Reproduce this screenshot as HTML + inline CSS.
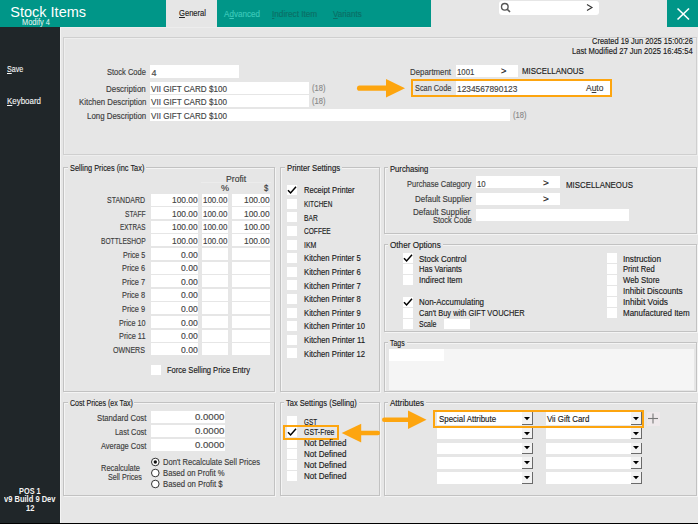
<!DOCTYPE html>
<html><head><meta charset="utf-8"><style>
html,body{margin:0;padding:0;}
body{width:698px;height:524px;overflow:hidden;position:relative;background:#e6e6e6;font-family:"Liberation Sans", sans-serif;}
body>div{position:absolute;box-sizing:border-box;}
.t{white-space:nowrap;transform-origin:0 0;-webkit-text-stroke:0.15px currentColor;}
</style></head><body>
<div style="left:0px;top:0px;width:166px;height:27px;background:#009688;"></div>
<div style="left:217px;top:0px;width:214px;height:27px;background:#009688;"></div>
<div style="left:667px;top:0px;width:31px;height:27px;background:#009688;"></div>
<div style="left:499px;top:1px;width:100px;height:14px;background:#fff;border-radius:3px"></div>
<svg style="position:absolute;left:500px;top:2px" width="12" height="12" viewBox="0 0 12 12"><circle cx="4.8" cy="4.8" r="3.3" fill="none" stroke="#555" stroke-width="1.4"/><line x1="7.2" y1="7.2" x2="10" y2="10" stroke="#555" stroke-width="1.6"/></svg>
<svg style="position:absolute;left:585px;top:3px" width="10" height="9" viewBox="0 0 10 9"><polyline points="2,1.5 7,4.5 2,7.5" fill="none" stroke="#333" stroke-width="1.1"/></svg>
<svg style="position:absolute;left:667px;top:0px" width="31" height="27" viewBox="0 0 31 27"><line x1="10.5" y1="8.5" x2="22" y2="19.5" stroke="#fff" stroke-width="1.6"/><line x1="22" y1="8.5" x2="10.5" y2="19.5" stroke="#fff" stroke-width="1.6"/></svg>
<div style="left:0px;top:27px;width:60px;height:496px;background:#202629;"></div>
<div style="left:60px;top:27px;width:1px;height:496px;background:#f4f4f4;"></div>
<div style="left:60px;top:27px;width:371px;height:1px;background:#ededed;"></div>
<div style="left:0px;top:523px;width:698px;height:1px;background:#000;"></div>
<div style="left:64px;top:38px;width:634px;height:118px;background:transparent;border:1px solid #eeeeee"></div>
<div style="left:63px;top:37px;width:634px;height:118px;background:transparent;border:1px solid #cfcfcf"></div>
<div style="left:150px;top:65px;width:89px;height:13px;background:#fff;"></div>
<div style="left:150px;top:82px;width:159px;height:12px;background:#fff;"></div>
<div style="left:150px;top:95px;width:159px;height:12px;background:#fff;"></div>
<div style="left:150px;top:109px;width:360px;height:12px;background:#fff;"></div>
<div style="left:456px;top:65px;width:62px;height:12px;background:#fff;"></div>
<div style="left:411px;top:79px;width:201px;height:18px;background:transparent;border:2px solid #fda50f"></div>
<div style="left:456px;top:81px;width:154px;height:14px;background:#fff;"></div>
<div style="left:64px;top:168px;width:212px;height:225px;background:transparent;border:1px solid #f4f4f4"></div>
<div style="left:63px;top:167px;width:212px;height:225px;background:transparent;border:1px solid #c2c2c2"></div>
<div style="left:67.6px;top:166px;width:78.30000000000001px;height:4px;background:#e6e6e6;"></div>
<div style="left:201px;top:182px;width:70px;height:1px;background:#ececec;"></div>
<div style="left:150.5px;top:194px;width:47.5px;height:12px;background:#fff;"></div>
<div style="left:202px;top:194px;width:26.30000000000001px;height:12px;background:#fff;"></div>
<div style="left:232.3px;top:194px;width:37.89999999999998px;height:12px;background:#fff;"></div>
<div style="left:150.5px;top:207px;width:47.5px;height:12px;background:#fff;"></div>
<div style="left:202px;top:207px;width:26.30000000000001px;height:12px;background:#fff;"></div>
<div style="left:232.3px;top:207px;width:37.89999999999998px;height:12px;background:#fff;"></div>
<div style="left:150.5px;top:221px;width:47.5px;height:12px;background:#fff;"></div>
<div style="left:202px;top:221px;width:26.30000000000001px;height:12px;background:#fff;"></div>
<div style="left:232.3px;top:221px;width:37.89999999999998px;height:12px;background:#fff;"></div>
<div style="left:150.5px;top:234px;width:47.5px;height:12px;background:#fff;"></div>
<div style="left:202px;top:234px;width:26.30000000000001px;height:12px;background:#fff;"></div>
<div style="left:232.3px;top:234px;width:37.89999999999998px;height:12px;background:#fff;"></div>
<div style="left:150.5px;top:248px;width:47.5px;height:12px;background:#fff;"></div>
<div style="left:202px;top:248px;width:26.30000000000001px;height:12px;background:#fff;"></div>
<div style="left:232.3px;top:248px;width:37.89999999999998px;height:12px;background:#fff;"></div>
<div style="left:150.5px;top:262px;width:47.5px;height:12px;background:#fff;"></div>
<div style="left:202px;top:262px;width:26.30000000000001px;height:12px;background:#fff;"></div>
<div style="left:232.3px;top:262px;width:37.89999999999998px;height:12px;background:#fff;"></div>
<div style="left:150.5px;top:275px;width:47.5px;height:12px;background:#fff;"></div>
<div style="left:202px;top:275px;width:26.30000000000001px;height:12px;background:#fff;"></div>
<div style="left:232.3px;top:275px;width:37.89999999999998px;height:12px;background:#fff;"></div>
<div style="left:150.5px;top:289px;width:47.5px;height:12px;background:#fff;"></div>
<div style="left:202px;top:289px;width:26.30000000000001px;height:12px;background:#fff;"></div>
<div style="left:232.3px;top:289px;width:37.89999999999998px;height:12px;background:#fff;"></div>
<div style="left:150.5px;top:302px;width:47.5px;height:12px;background:#fff;"></div>
<div style="left:202px;top:302px;width:26.30000000000001px;height:12px;background:#fff;"></div>
<div style="left:232.3px;top:302px;width:37.89999999999998px;height:12px;background:#fff;"></div>
<div style="left:150.5px;top:316px;width:47.5px;height:12px;background:#fff;"></div>
<div style="left:202px;top:316px;width:26.30000000000001px;height:12px;background:#fff;"></div>
<div style="left:232.3px;top:316px;width:37.89999999999998px;height:12px;background:#fff;"></div>
<div style="left:150.5px;top:330px;width:47.5px;height:12px;background:#fff;"></div>
<div style="left:202px;top:330px;width:26.30000000000001px;height:12px;background:#fff;"></div>
<div style="left:232.3px;top:330px;width:37.89999999999998px;height:12px;background:#fff;"></div>
<div style="left:150.5px;top:343px;width:47.5px;height:12px;background:#fff;"></div>
<div style="left:202px;top:343px;width:26.30000000000001px;height:12px;background:#fff;"></div>
<div style="left:232.3px;top:343px;width:37.89999999999998px;height:12px;background:#fff;"></div>
<div style="left:151px;top:365px;width:10px;height:10px;background:#fff;"></div>
<div style="left:281px;top:168px;width:100px;height:225px;background:transparent;border:1px solid #f4f4f4"></div>
<div style="left:280px;top:167px;width:100px;height:225px;background:transparent;border:1px solid #c2c2c2"></div>
<div style="left:284.7px;top:166px;width:57.10000000000002px;height:4px;background:#e6e6e6;"></div>
<div style="left:287px;top:185px;width:10px;height:10px;background:#fff;"></div>
<svg style="position:absolute;left:287px;top:185px" width="10" height="10" viewBox="0 0 10 10"><polyline points="1,5.2 3.6,8 9,1.8" fill="none" stroke="#000" stroke-width="1.5"/></svg>
<div style="left:287px;top:199px;width:10px;height:10px;background:#fff;"></div>
<div style="left:287px;top:212px;width:10px;height:10px;background:#fff;"></div>
<div style="left:287px;top:226px;width:10px;height:10px;background:#fff;"></div>
<div style="left:287px;top:240px;width:10px;height:10px;background:#fff;"></div>
<div style="left:287px;top:253px;width:10px;height:10px;background:#fff;"></div>
<div style="left:287px;top:267px;width:10px;height:10px;background:#fff;"></div>
<div style="left:287px;top:280px;width:10px;height:10px;background:#fff;"></div>
<div style="left:287px;top:294px;width:10px;height:10px;background:#fff;"></div>
<div style="left:287px;top:308px;width:10px;height:10px;background:#fff;"></div>
<div style="left:287px;top:321px;width:10px;height:10px;background:#fff;"></div>
<div style="left:287px;top:335px;width:10px;height:10px;background:#fff;"></div>
<div style="left:287px;top:348px;width:10px;height:10px;background:#fff;"></div>
<div style="left:385px;top:168px;width:313px;height:67px;background:transparent;border:1px solid #f4f4f4"></div>
<div style="left:384px;top:167px;width:313px;height:67px;background:transparent;border:1px solid #c2c2c2"></div>
<div style="left:388px;top:166px;width:42.30000000000001px;height:4px;background:#e6e6e6;"></div>
<div style="left:476px;top:176px;width:84px;height:12px;background:#fff;"></div>
<div style="left:476px;top:193px;width:84px;height:12px;background:#fff;"></div>
<div style="left:476px;top:209px;width:153px;height:12px;background:#fff;"></div>
<div style="left:385px;top:245px;width:313px;height:88px;background:transparent;border:1px solid #f4f4f4"></div>
<div style="left:384px;top:244px;width:313px;height:88px;background:transparent;border:1px solid #c2c2c2"></div>
<div style="left:388px;top:243px;width:54.69999999999999px;height:4px;background:#e6e6e6;"></div>
<div style="left:403px;top:253px;width:10px;height:10px;background:#fff;"></div>
<svg style="position:absolute;left:403px;top:253px" width="10" height="10" viewBox="0 0 10 10"><polyline points="1,5.2 3.6,8 9,1.8" fill="none" stroke="#000" stroke-width="1.5"/></svg>
<div style="left:403px;top:264px;width:10px;height:10px;background:#fff;"></div>
<div style="left:403px;top:275px;width:10px;height:10px;background:#fff;"></div>
<div style="left:403px;top:297px;width:10px;height:10px;background:#fff;"></div>
<svg style="position:absolute;left:403px;top:297px" width="10" height="10" viewBox="0 0 10 10"><polyline points="1,5.2 3.6,8 9,1.8" fill="none" stroke="#000" stroke-width="1.5"/></svg>
<div style="left:403px;top:308px;width:10px;height:10px;background:#fff;"></div>
<div style="left:403px;top:319px;width:10px;height:10px;background:#fff;"></div>
<div style="left:444px;top:319px;width:26px;height:9.5px;background:#fff;"></div>
<div style="left:607px;top:253px;width:10px;height:10px;background:#fff;"></div>
<div style="left:607px;top:264px;width:10px;height:10px;background:#fff;"></div>
<div style="left:607px;top:275px;width:10px;height:10px;background:#fff;"></div>
<div style="left:607px;top:286px;width:10px;height:10px;background:#fff;"></div>
<div style="left:607px;top:297px;width:10px;height:10px;background:#fff;"></div>
<div style="left:607px;top:308px;width:10px;height:10px;background:#fff;"></div>
<div style="left:385px;top:343px;width:313px;height:50px;background:transparent;border:1px solid #f4f4f4"></div>
<div style="left:384px;top:342px;width:313px;height:50px;background:transparent;border:1px solid #c2c2c2"></div>
<div style="left:388px;top:341px;width:18.600000000000023px;height:4px;background:#e6e6e6;"></div>
<div style="left:389px;top:349px;width:305px;height:41px;background:#f5f5f5;"></div>
<div style="left:389px;top:349px;width:55px;height:12px;background:#fff;"></div>
<div style="left:64px;top:403px;width:212px;height:94px;background:transparent;border:1px solid #f4f4f4"></div>
<div style="left:63px;top:402px;width:212px;height:94px;background:transparent;border:1px solid #c2c2c2"></div>
<div style="left:67.6px;top:401px;width:66.9px;height:4px;background:#e6e6e6;"></div>
<div style="left:150.5px;top:411px;width:74.5px;height:12px;background:#fff;"></div>
<div style="left:150.5px;top:425px;width:74.5px;height:12px;background:#fff;"></div>
<div style="left:150.5px;top:439px;width:74.5px;height:12px;background:#fff;"></div>
<svg style="position:absolute;left:150px;top:456px" width="12" height="12" viewBox="0 0 12 12"><circle cx="5.3" cy="6" r="3.8" fill="#fff" stroke="#333" stroke-width="1"/><circle cx="5.3" cy="6" r="1.7" fill="#111"/></svg>
<svg style="position:absolute;left:150px;top:467px" width="12" height="12" viewBox="0 0 12 12"><circle cx="5.3" cy="6" r="3.8" fill="#fff" stroke="#333" stroke-width="1"/></svg>
<svg style="position:absolute;left:150px;top:478px" width="12" height="12" viewBox="0 0 12 12"><circle cx="5.3" cy="6" r="3.8" fill="#fff" stroke="#333" stroke-width="1"/></svg>
<div style="left:281px;top:403px;width:100px;height:94px;background:transparent;border:1px solid #f4f4f4"></div>
<div style="left:280px;top:402px;width:100px;height:94px;background:transparent;border:1px solid #c2c2c2"></div>
<div style="left:284.4px;top:401px;width:74.80000000000001px;height:4px;background:#e6e6e6;"></div>
<div style="left:287px;top:416px;width:10px;height:10px;background:#fff;"></div>
<div style="left:287px;top:427px;width:10px;height:10px;background:#fff;"></div>
<svg style="position:absolute;left:287px;top:427px" width="10" height="10" viewBox="0 0 10 10"><polyline points="1,5.2 3.6,8 9,1.8" fill="none" stroke="#000" stroke-width="1.5"/></svg>
<div style="left:287px;top:438px;width:10px;height:10px;background:#fff;"></div>
<div style="left:287px;top:449px;width:10px;height:10px;background:#fff;"></div>
<div style="left:287px;top:460px;width:10px;height:10px;background:#fff;"></div>
<div style="left:287px;top:471px;width:10px;height:10px;background:#fff;"></div>
<div style="left:283px;top:425px;width:55.5px;height:15px;background:transparent;border:2px solid #fda50f"></div>
<div style="left:385px;top:403px;width:313px;height:94px;background:transparent;border:1px solid #f4f4f4"></div>
<div style="left:384px;top:402px;width:313px;height:94px;background:transparent;border:1px solid #c2c2c2"></div>
<div style="left:388px;top:401px;width:38px;height:4px;background:#e6e6e6;"></div>
<div style="left:437px;top:412px;width:96px;height:13px;background:#fff;"></div>
<div style="left:521.5px;top:412px;width:11.5px;height:13px;background:#f3f3f3;border-right:1px solid #6a6a6a;border-bottom:1px solid #6a6a6a"></div>
<svg style="position:absolute;left:524px;top:416.5px" width="6" height="4" viewBox="0 0 6 4"><polygon points="0,0 6,0 3,3.2" fill="#000"/></svg>
<div style="left:546px;top:412px;width:96px;height:13px;background:#fff;"></div>
<div style="left:630.5px;top:412px;width:11.5px;height:13px;background:#f3f3f3;border-right:1px solid #6a6a6a;border-bottom:1px solid #6a6a6a"></div>
<svg style="position:absolute;left:633px;top:416.5px" width="6" height="4" viewBox="0 0 6 4"><polygon points="0,0 6,0 3,3.2" fill="#000"/></svg>
<div style="left:437px;top:428px;width:96px;height:11px;background:#fff;"></div>
<div style="left:521.5px;top:428px;width:11.5px;height:11px;background:#f3f3f3;border-right:1px solid #6a6a6a;border-bottom:1px solid #6a6a6a"></div>
<svg style="position:absolute;left:524px;top:431.5px" width="6" height="4" viewBox="0 0 6 4"><polygon points="0,0 6,0 3,3.2" fill="#000"/></svg>
<div style="left:546px;top:428px;width:96px;height:11px;background:#fff;"></div>
<div style="left:630.5px;top:428px;width:11.5px;height:11px;background:#f3f3f3;border-right:1px solid #6a6a6a;border-bottom:1px solid #6a6a6a"></div>
<svg style="position:absolute;left:633px;top:431.5px" width="6" height="4" viewBox="0 0 6 4"><polygon points="0,0 6,0 3,3.2" fill="#000"/></svg>
<div style="left:437px;top:442.5px;width:96px;height:11.5px;background:#fff;"></div>
<div style="left:521.5px;top:442.5px;width:11.5px;height:11.5px;background:#f3f3f3;border-right:1px solid #6a6a6a;border-bottom:1px solid #6a6a6a"></div>
<svg style="position:absolute;left:524px;top:446.25px" width="6" height="4" viewBox="0 0 6 4"><polygon points="0,0 6,0 3,3.2" fill="#000"/></svg>
<div style="left:546px;top:442.5px;width:96px;height:11.5px;background:#fff;"></div>
<div style="left:630.5px;top:442.5px;width:11.5px;height:11.5px;background:#f3f3f3;border-right:1px solid #6a6a6a;border-bottom:1px solid #6a6a6a"></div>
<svg style="position:absolute;left:633px;top:446.25px" width="6" height="4" viewBox="0 0 6 4"><polygon points="0,0 6,0 3,3.2" fill="#000"/></svg>
<div style="left:437px;top:457px;width:96px;height:12px;background:#fff;"></div>
<div style="left:521.5px;top:457px;width:11.5px;height:12px;background:#f3f3f3;border-right:1px solid #6a6a6a;border-bottom:1px solid #6a6a6a"></div>
<svg style="position:absolute;left:524px;top:461.0px" width="6" height="4" viewBox="0 0 6 4"><polygon points="0,0 6,0 3,3.2" fill="#000"/></svg>
<div style="left:546px;top:457px;width:96px;height:12px;background:#fff;"></div>
<div style="left:630.5px;top:457px;width:11.5px;height:12px;background:#f3f3f3;border-right:1px solid #6a6a6a;border-bottom:1px solid #6a6a6a"></div>
<svg style="position:absolute;left:633px;top:461.0px" width="6" height="4" viewBox="0 0 6 4"><polygon points="0,0 6,0 3,3.2" fill="#000"/></svg>
<div style="left:437px;top:472px;width:96px;height:12px;background:#fff;"></div>
<div style="left:521.5px;top:472px;width:11.5px;height:12px;background:#f3f3f3;border-right:1px solid #6a6a6a;border-bottom:1px solid #6a6a6a"></div>
<svg style="position:absolute;left:524px;top:476.0px" width="6" height="4" viewBox="0 0 6 4"><polygon points="0,0 6,0 3,3.2" fill="#000"/></svg>
<div style="left:546px;top:472px;width:96px;height:12px;background:#fff;"></div>
<div style="left:630.5px;top:472px;width:11.5px;height:12px;background:#f3f3f3;border-right:1px solid #6a6a6a;border-bottom:1px solid #6a6a6a"></div>
<svg style="position:absolute;left:633px;top:476.0px" width="6" height="4" viewBox="0 0 6 4"><polygon points="0,0 6,0 3,3.2" fill="#000"/></svg>
<div style="left:433px;top:410px;width:211px;height:17.5px;background:transparent;border:2px solid #fda50f"></div>
<div style="left:646.5px;top:411.5px;width:13.5px;height:14.5px;background:#efe9eb;"></div>
<svg style="position:absolute;left:646px;top:411px" width="14" height="15" viewBox="0 0 14 15"><line x1="7" y1="2.5" x2="7" y2="12.5" stroke="#777" stroke-width="1.1"/><line x1="2" y1="7.5" x2="12" y2="7.5" stroke="#777" stroke-width="1.1"/></svg>
<svg style="position:absolute;left:0;top:0" width="698" height="524"><line x1="359.6" y1="88.2" x2="387" y2="88.2" stroke="#fda50f" stroke-width="5.2" stroke-linecap="round"/><polygon points="386,78.9 405,88.2 386,97.5" fill="#fda50f"/></svg>
<svg style="position:absolute;left:0;top:0" width="698" height="524"><line x1="384.25" y1="419.8" x2="409" y2="419.8" stroke="#fda50f" stroke-width="4.5" stroke-linecap="round"/><polygon points="408,410.6 426.5,419.8 408,429.0" fill="#fda50f"/></svg>
<svg style="position:absolute;left:0;top:0" width="698" height="524"><line x1="360" y1="432.9" x2="377.8" y2="432.9" stroke="#fda50f" stroke-width="4.5" stroke-linecap="round"/><polygon points="361.2,423.8 341.7,432.9 361.2,442.6" fill="#fda50f"/></svg>
<div class="t" style="left:10.30px;top:4.73px;font-size:14.5px;line-height:14.5px;color:#fff;font-weight:400;-webkit-text-stroke:0;">Stock Items</div>
<div class="t" style="left:21.50px;top:18.38px;font-size:9px;line-height:9px;color:#eef7f5;font-weight:400;transform:scaleX(0.820);-webkit-text-stroke:0;">Modify 4</div>
<div class="t" style="left:178.60px;top:9.40px;font-size:8.5px;line-height:8.5px;color:#222;font-weight:400;transform:scaleX(0.892);"><u>G</u>eneral</div>
<div class="t" style="left:224.20px;top:10.00px;font-size:8.5px;line-height:8.5px;color:#3cc9ba;font-weight:400;transform:scaleX(0.952);">A<u>d</u>vanced</div>
<div class="t" style="left:271.80px;top:10.00px;font-size:8.5px;line-height:8.5px;color:#0b6f66;font-weight:400;transform:scaleX(0.966);"><u>I</u>ndirect Item</div>
<div class="t" style="left:333.00px;top:10.00px;font-size:8.5px;line-height:8.5px;color:#0b6f66;font-weight:400;transform:scaleX(0.939);"><u>V</u>ariants</div>
<div class="t" style="left:7.00px;top:65.30px;font-size:8.5px;line-height:8.5px;color:#f6f6f6;font-weight:400;transform:scaleX(0.841);-webkit-text-stroke:0.1px currentColor;"><u>S</u>ave</div>
<div class="t" style="left:7.00px;top:97.40px;font-size:8.5px;line-height:8.5px;color:#f6f6f6;font-weight:400;transform:scaleX(0.934);-webkit-text-stroke:0.1px currentColor;"><u>K</u>eyboard</div>
<div class="t" style="left:19.20px;top:487.00px;font-size:8.5px;line-height:8.5px;color:#f4f4f4;font-weight:700;transform:scaleX(0.866);-webkit-text-stroke:0;">POS 1</div>
<div class="t" style="left:3.80px;top:495.10px;font-size:8.5px;line-height:8.5px;color:#f4f4f4;font-weight:700;transform:scaleX(0.886);-webkit-text-stroke:0;">v9 Build 9 Dev</div>
<div class="t" style="left:26.00px;top:503.60px;font-size:8.5px;line-height:8.5px;color:#f4f4f4;font-weight:700;transform:scaleX(0.887);-webkit-text-stroke:0;">12</div>
<div class="t" style="left:591.60px;top:37.38px;font-size:9px;line-height:9px;color:#1a1a1a;font-weight:400;transform:scaleX(0.830);">Created 19 Jun 2025 15:00:26</div>
<div class="t" style="left:571.90px;top:46.78px;font-size:9px;line-height:9px;color:#1a1a1a;font-weight:400;transform:scaleX(0.843);">Last Modified 27 Jun 2025 16:45:54</div>
<div class="t" style="left:106.60px;top:68.38px;font-size:9px;line-height:9px;color:#3c3c3c;font-weight:400;transform:scaleX(0.836);">Stock Code</div>
<div class="t" style="left:105.80px;top:84.58px;font-size:9px;line-height:9px;color:#3c3c3c;font-weight:400;transform:scaleX(0.882);">Description</div>
<div class="t" style="left:78.60px;top:98.48px;font-size:9px;line-height:9px;color:#3c3c3c;font-weight:400;transform:scaleX(0.869);">Kitchen Description</div>
<div class="t" style="left:86.80px;top:112.08px;font-size:9px;line-height:9px;color:#3c3c3c;font-weight:400;transform:scaleX(0.876);">Long Description</div>
<div class="t" style="left:151.50px;top:68.88px;font-size:9px;line-height:9px;color:#444;font-weight:400;">4</div>
<div class="t" style="left:151.00px;top:84.58px;font-size:9px;line-height:9px;color:#444;font-weight:400;transform:scaleX(0.901);">VII GIFT CARD $100</div>
<div class="t" style="left:151.00px;top:98.18px;font-size:9px;line-height:9px;color:#444;font-weight:400;transform:scaleX(0.901);">VII GIFT CARD $100</div>
<div class="t" style="left:151.00px;top:111.78px;font-size:9px;line-height:9px;color:#444;font-weight:400;transform:scaleX(0.901);">VII GIFT CARD $100</div>
<div class="t" style="left:311.60px;top:83.88px;font-size:9px;line-height:9px;color:#888;font-weight:400;transform:scaleX(0.837);">(18)</div>
<div class="t" style="left:311.60px;top:97.38px;font-size:9px;line-height:9px;color:#888;font-weight:400;transform:scaleX(0.837);">(18)</div>
<div class="t" style="left:513.00px;top:110.98px;font-size:9px;line-height:9px;color:#888;font-weight:400;transform:scaleX(0.837);">(18)</div>
<div class="t" style="left:410.00px;top:68.28px;font-size:9px;line-height:9px;color:#3c3c3c;font-weight:400;transform:scaleX(0.872);">Department</div>
<div class="t" style="left:457.00px;top:68.38px;font-size:9px;line-height:9px;color:#444;font-weight:400;transform:scaleX(0.869);">1001</div>
<div class="t" style="left:501.00px;top:67.38px;font-size:9px;line-height:9px;color:#1a1a1a;font-weight:400;transform:scaleX(1.045);">&gt;</div>
<div class="t" style="left:522.30px;top:67.18px;font-size:9px;line-height:9px;color:#1a1a1a;font-weight:400;transform:scaleX(0.875);">MISCELLANOUS</div>
<div class="t" style="left:414.70px;top:84.08px;font-size:9px;line-height:9px;color:#3c3c3c;font-weight:400;transform:scaleX(0.815);">Scan Code</div>
<div class="t" style="left:457.00px;top:84.58px;font-size:9px;line-height:9px;color:#444;font-weight:400;transform:scaleX(0.927);">1234567890123</div>
<div class="t" style="left:586.40px;top:84.38px;font-size:9px;line-height:9px;color:#3c3c3c;font-weight:400;transform:scaleX(0.938);">A<u>u</u>to</div>
<div class="t" style="left:69.60px;top:164.48px;font-size:9px;line-height:9px;color:#1a1a1a;font-weight:400;transform:scaleX(0.818);">Selling Prices (inc Tax)</div>
<div class="t" style="left:225.80px;top:174.78px;font-size:9px;line-height:9px;color:#3c3c3c;font-weight:400;transform:scaleX(0.961);">Profit</div>
<div class="t" style="left:221.10px;top:183.88px;font-size:9px;line-height:9px;color:#3c3c3c;font-weight:400;transform:scaleX(1.011);">%</div>
<div class="t" style="left:263.50px;top:183.88px;font-size:9px;line-height:9px;color:#3c3c3c;font-weight:400;transform:scaleX(0.857);">$</div>
<div class="t" style="left:107.20px;top:196.28px;font-size:9px;line-height:9px;color:#3c3c3c;font-weight:400;transform:scaleX(0.778);">STANDARD</div>
<div class="t" style="left:172.00px;top:196.28px;font-size:9px;line-height:9px;color:#444;font-weight:400;transform:scaleX(0.930);">100.00</div>
<div class="t" style="left:203.40px;top:196.28px;font-size:9px;line-height:9px;color:#444;font-weight:400;transform:scaleX(0.886);">100.00</div>
<div class="t" style="left:244.30px;top:196.28px;font-size:9px;line-height:9px;color:#444;font-weight:400;transform:scaleX(0.933);">100.00</div>
<div class="t" style="left:124.50px;top:209.88px;font-size:9px;line-height:9px;color:#3c3c3c;font-weight:400;transform:scaleX(0.743);">STAFF</div>
<div class="t" style="left:172.00px;top:209.88px;font-size:9px;line-height:9px;color:#444;font-weight:400;transform:scaleX(0.930);">100.00</div>
<div class="t" style="left:203.40px;top:209.88px;font-size:9px;line-height:9px;color:#444;font-weight:400;transform:scaleX(0.886);">100.00</div>
<div class="t" style="left:244.30px;top:209.88px;font-size:9px;line-height:9px;color:#444;font-weight:400;transform:scaleX(0.933);">100.00</div>
<div class="t" style="left:119.60px;top:223.48px;font-size:9px;line-height:9px;color:#3c3c3c;font-weight:400;transform:scaleX(0.711);">EXTRAS</div>
<div class="t" style="left:172.00px;top:223.48px;font-size:9px;line-height:9px;color:#444;font-weight:400;transform:scaleX(0.930);">100.00</div>
<div class="t" style="left:203.40px;top:223.48px;font-size:9px;line-height:9px;color:#444;font-weight:400;transform:scaleX(0.886);">100.00</div>
<div class="t" style="left:244.30px;top:223.48px;font-size:9px;line-height:9px;color:#444;font-weight:400;transform:scaleX(0.933);">100.00</div>
<div class="t" style="left:100.50px;top:237.08px;font-size:9px;line-height:9px;color:#3c3c3c;font-weight:400;transform:scaleX(0.739);">BOTTLESHOP</div>
<div class="t" style="left:172.00px;top:237.08px;font-size:9px;line-height:9px;color:#444;font-weight:400;transform:scaleX(0.930);">100.00</div>
<div class="t" style="left:203.40px;top:237.08px;font-size:9px;line-height:9px;color:#444;font-weight:400;transform:scaleX(0.886);">100.00</div>
<div class="t" style="left:244.30px;top:237.08px;font-size:9px;line-height:9px;color:#444;font-weight:400;transform:scaleX(0.933);">100.00</div>
<div class="t" style="left:122.90px;top:250.68px;font-size:9px;line-height:9px;color:#3c3c3c;font-weight:400;transform:scaleX(0.796);">Price 5</div>
<div class="t" style="left:180.80px;top:250.68px;font-size:9px;line-height:9px;color:#444;font-weight:400;transform:scaleX(0.958);">0.00</div>
<div class="t" style="left:122.20px;top:264.28px;font-size:9px;line-height:9px;color:#3c3c3c;font-weight:400;transform:scaleX(0.821);">Price 6</div>
<div class="t" style="left:180.80px;top:264.28px;font-size:9px;line-height:9px;color:#444;font-weight:400;transform:scaleX(0.958);">0.00</div>
<div class="t" style="left:122.20px;top:277.88px;font-size:9px;line-height:9px;color:#3c3c3c;font-weight:400;transform:scaleX(0.821);">Price 7</div>
<div class="t" style="left:180.80px;top:277.88px;font-size:9px;line-height:9px;color:#444;font-weight:400;transform:scaleX(0.958);">0.00</div>
<div class="t" style="left:122.20px;top:291.48px;font-size:9px;line-height:9px;color:#3c3c3c;font-weight:400;transform:scaleX(0.821);">Price 8</div>
<div class="t" style="left:180.80px;top:291.48px;font-size:9px;line-height:9px;color:#444;font-weight:400;transform:scaleX(0.958);">0.00</div>
<div class="t" style="left:122.20px;top:305.08px;font-size:9px;line-height:9px;color:#3c3c3c;font-weight:400;transform:scaleX(0.821);">Price 9</div>
<div class="t" style="left:180.80px;top:305.08px;font-size:9px;line-height:9px;color:#444;font-weight:400;transform:scaleX(0.958);">0.00</div>
<div class="t" style="left:118.70px;top:318.68px;font-size:9px;line-height:9px;color:#3c3c3c;font-weight:400;transform:scaleX(0.802);">Price 10</div>
<div class="t" style="left:180.80px;top:318.68px;font-size:9px;line-height:9px;color:#444;font-weight:400;transform:scaleX(0.958);">0.00</div>
<div class="t" style="left:118.70px;top:332.28px;font-size:9px;line-height:9px;color:#3c3c3c;font-weight:400;transform:scaleX(0.819);">Price 11</div>
<div class="t" style="left:180.80px;top:332.28px;font-size:9px;line-height:9px;color:#444;font-weight:400;transform:scaleX(0.958);">0.00</div>
<div class="t" style="left:113.20px;top:345.88px;font-size:9px;line-height:9px;color:#3c3c3c;font-weight:400;transform:scaleX(0.790);">OWNERS</div>
<div class="t" style="left:180.80px;top:345.88px;font-size:9px;line-height:9px;color:#444;font-weight:400;transform:scaleX(0.958);">0.00</div>
<div class="t" style="left:167.00px;top:366.38px;font-size:9px;line-height:9px;color:#1a1a1a;font-weight:400;transform:scaleX(0.838);">Force Selling Price Entry</div>
<div class="t" style="left:286.70px;top:164.48px;font-size:9px;line-height:9px;color:#1a1a1a;font-weight:400;transform:scaleX(0.863);">Printer Settings</div>
<div class="t" style="left:303.70px;top:186.38px;font-size:9px;line-height:9px;color:#1a1a1a;font-weight:400;transform:scaleX(0.850);">Receipt Printer</div>
<div class="t" style="left:303.70px;top:199.98px;font-size:9px;line-height:9px;color:#1a1a1a;font-weight:400;transform:scaleX(0.716);">KITCHEN</div>
<div class="t" style="left:303.70px;top:213.58px;font-size:9px;line-height:9px;color:#1a1a1a;font-weight:400;transform:scaleX(0.745);">BAR</div>
<div class="t" style="left:303.70px;top:227.18px;font-size:9px;line-height:9px;color:#1a1a1a;font-weight:400;transform:scaleX(0.731);">COFFEE</div>
<div class="t" style="left:303.70px;top:240.78px;font-size:9px;line-height:9px;color:#1a1a1a;font-weight:400;transform:scaleX(0.774);">IKM</div>
<div class="t" style="left:303.70px;top:254.38px;font-size:9px;line-height:9px;color:#1a1a1a;font-weight:400;transform:scaleX(0.854);">Kitchen Printer 5</div>
<div class="t" style="left:303.70px;top:267.98px;font-size:9px;line-height:9px;color:#1a1a1a;font-weight:400;transform:scaleX(0.854);">Kitchen Printer 6</div>
<div class="t" style="left:303.70px;top:281.58px;font-size:9px;line-height:9px;color:#1a1a1a;font-weight:400;transform:scaleX(0.854);">Kitchen Printer 7</div>
<div class="t" style="left:303.70px;top:295.18px;font-size:9px;line-height:9px;color:#1a1a1a;font-weight:400;transform:scaleX(0.854);">Kitchen Printer 8</div>
<div class="t" style="left:303.70px;top:308.78px;font-size:9px;line-height:9px;color:#1a1a1a;font-weight:400;transform:scaleX(0.854);">Kitchen Printer 9</div>
<div class="t" style="left:303.70px;top:322.38px;font-size:9px;line-height:9px;color:#1a1a1a;font-weight:400;transform:scaleX(0.854);">Kitchen Printer 10</div>
<div class="t" style="left:303.70px;top:335.98px;font-size:9px;line-height:9px;color:#1a1a1a;font-weight:400;transform:scaleX(0.862);">Kitchen Printer 11</div>
<div class="t" style="left:303.70px;top:349.58px;font-size:9px;line-height:9px;color:#1a1a1a;font-weight:400;transform:scaleX(0.854);">Kitchen Printer 12</div>
<div class="t" style="left:390.00px;top:164.58px;font-size:9px;line-height:9px;color:#1a1a1a;font-weight:400;transform:scaleX(0.851);">Purchasing</div>
<div class="t" style="left:406.80px;top:179.58px;font-size:9px;line-height:9px;color:#3c3c3c;font-weight:400;transform:scaleX(0.833);">Purchase Category</div>
<div class="t" style="left:414.80px;top:194.88px;font-size:9px;line-height:9px;color:#3c3c3c;font-weight:400;transform:scaleX(0.888);">Default Supplier</div>
<div class="t" style="left:413.20px;top:208.28px;font-size:9px;line-height:9px;color:#3c3c3c;font-weight:400;transform:scaleX(0.892);">Default Supplier</div>
<div class="t" style="left:433.30px;top:216.38px;font-size:9px;line-height:9px;color:#3c3c3c;font-weight:400;transform:scaleX(0.832);">Stock Code</div>
<div class="t" style="left:477.00px;top:180.18px;font-size:9px;line-height:9px;color:#444;font-weight:400;transform:scaleX(0.869);">10</div>
<div class="t" style="left:542.50px;top:179.38px;font-size:9px;line-height:9px;color:#1a1a1a;font-weight:400;transform:scaleX(1.120);">&gt;</div>
<div class="t" style="left:542.50px;top:195.38px;font-size:9px;line-height:9px;color:#1a1a1a;font-weight:400;transform:scaleX(1.120);">&gt;</div>
<div class="t" style="left:566.40px;top:180.58px;font-size:9px;line-height:9px;color:#1a1a1a;font-weight:400;transform:scaleX(0.874);">MISCELLANEOUS</div>
<div class="t" style="left:390.00px;top:240.78px;font-size:9px;line-height:9px;color:#1a1a1a;font-weight:400;transform:scaleX(0.905);">Other Options</div>
<div class="t" style="left:419.40px;top:254.58px;font-size:9px;line-height:9px;color:#1a1a1a;font-weight:400;transform:scaleX(0.881);">Stock Control</div>
<div class="t" style="left:419.40px;top:265.48px;font-size:9px;line-height:9px;color:#1a1a1a;font-weight:400;transform:scaleX(0.844);">Has Variants</div>
<div class="t" style="left:419.40px;top:276.38px;font-size:9px;line-height:9px;color:#1a1a1a;font-weight:400;transform:scaleX(0.874);">Indirect Item</div>
<div class="t" style="left:419.40px;top:298.18px;font-size:9px;line-height:9px;color:#1a1a1a;font-weight:400;transform:scaleX(0.884);">Non-Accumulating</div>
<div class="t" style="left:419.40px;top:309.08px;font-size:9px;line-height:9px;color:#1a1a1a;font-weight:400;transform:scaleX(0.828);">Can't Buy with GIFT VOUCHER</div>
<div class="t" style="left:419.40px;top:319.98px;font-size:9px;line-height:9px;color:#1a1a1a;font-weight:400;transform:scaleX(0.773);">Scale</div>
<div class="t" style="left:623.00px;top:254.58px;font-size:9px;line-height:9px;color:#1a1a1a;font-weight:400;transform:scaleX(0.915);">Instruction</div>
<div class="t" style="left:623.00px;top:265.48px;font-size:9px;line-height:9px;color:#1a1a1a;font-weight:400;transform:scaleX(0.847);">Print Red</div>
<div class="t" style="left:623.00px;top:276.38px;font-size:9px;line-height:9px;color:#1a1a1a;font-weight:400;transform:scaleX(0.864);">Web Store</div>
<div class="t" style="left:623.00px;top:287.28px;font-size:9px;line-height:9px;color:#1a1a1a;font-weight:400;transform:scaleX(0.902);">Inhibit Discounts</div>
<div class="t" style="left:623.00px;top:298.18px;font-size:9px;line-height:9px;color:#1a1a1a;font-weight:400;transform:scaleX(0.927);">Inhibit Voids</div>
<div class="t" style="left:623.00px;top:309.08px;font-size:9px;line-height:9px;color:#1a1a1a;font-weight:400;transform:scaleX(0.889);">Manufactured Item</div>
<div class="t" style="left:390.00px;top:338.68px;font-size:9px;line-height:9px;color:#1a1a1a;font-weight:400;transform:scaleX(0.768);">Tags</div>
<div class="t" style="left:69.60px;top:398.78px;font-size:9px;line-height:9px;color:#1a1a1a;font-weight:400;transform:scaleX(0.783);">Cost Prices (ex Tax)</div>
<div class="t" style="left:96.50px;top:414.38px;font-size:9px;line-height:9px;color:#3c3c3c;font-weight:400;transform:scaleX(0.857);">Standard Cost</div>
<div class="t" style="left:114.50px;top:428.08px;font-size:9px;line-height:9px;color:#3c3c3c;font-weight:400;transform:scaleX(0.823);">Last Cost</div>
<div class="t" style="left:100.50px;top:441.58px;font-size:9px;line-height:9px;color:#3c3c3c;font-weight:400;transform:scaleX(0.833);">Average Cost</div>
<div class="t" style="left:195.00px;top:413.40px;font-size:8.5px;line-height:8.5px;color:#4a4a4a;font-weight:400;transform:scaleX(1.127);">0.0000</div>
<div class="t" style="left:195.00px;top:427.20px;font-size:8.5px;line-height:8.5px;color:#4a4a4a;font-weight:400;transform:scaleX(1.127);">0.0000</div>
<div class="t" style="left:195.00px;top:441.00px;font-size:8.5px;line-height:8.5px;color:#4a4a4a;font-weight:400;transform:scaleX(1.127);">0.0000</div>
<div class="t" style="left:100.70px;top:464.08px;font-size:9px;line-height:9px;color:#3c3c3c;font-weight:400;transform:scaleX(0.827);">Recalculate</div>
<div class="t" style="left:107.70px;top:472.58px;font-size:9px;line-height:9px;color:#3c3c3c;font-weight:400;transform:scaleX(0.797);">Sell Prices</div>
<div class="t" style="left:163.40px;top:457.88px;font-size:9px;line-height:9px;color:#3c3c3c;font-weight:400;transform:scaleX(0.842);">Don't Recalculate Sell Prices</div>
<div class="t" style="left:163.40px;top:468.88px;font-size:9px;line-height:9px;color:#3c3c3c;font-weight:400;transform:scaleX(0.854);">Based on Profit %</div>
<div class="t" style="left:163.40px;top:479.88px;font-size:9px;line-height:9px;color:#3c3c3c;font-weight:400;transform:scaleX(0.863);">Based on Profit $</div>
<div class="t" style="left:286.40px;top:398.78px;font-size:9px;line-height:9px;color:#1a1a1a;font-weight:400;transform:scaleX(0.837);">Tax Settings (Selling)</div>
<div class="t" style="left:303.70px;top:417.68px;font-size:9px;line-height:9px;color:#1a1a1a;font-weight:400;transform:scaleX(0.702);">GST</div>
<div class="t" style="left:303.70px;top:428.48px;font-size:9px;line-height:9px;color:#1a1a1a;font-weight:400;transform:scaleX(0.769);">GST-Free</div>
<div class="t" style="left:303.70px;top:439.28px;font-size:9px;line-height:9px;color:#1a1a1a;font-weight:400;transform:scaleX(0.892);">Not Defined</div>
<div class="t" style="left:303.70px;top:450.08px;font-size:9px;line-height:9px;color:#1a1a1a;font-weight:400;transform:scaleX(0.892);">Not Defined</div>
<div class="t" style="left:303.70px;top:460.88px;font-size:9px;line-height:9px;color:#1a1a1a;font-weight:400;transform:scaleX(0.892);">Not Defined</div>
<div class="t" style="left:303.70px;top:471.68px;font-size:9px;line-height:9px;color:#1a1a1a;font-weight:400;transform:scaleX(0.892);">Not Defined</div>
<div class="t" style="left:390.00px;top:398.78px;font-size:9px;line-height:9px;color:#1a1a1a;font-weight:400;transform:scaleX(0.894);">Attributes</div>
<div class="t" style="left:438.70px;top:415.38px;font-size:9px;line-height:9px;color:#1a1a1a;font-weight:400;transform:scaleX(0.878);">Special Attribute</div>
<div class="t" style="left:547.20px;top:415.38px;font-size:9px;line-height:9px;color:#1a1a1a;font-weight:400;transform:scaleX(0.875);">Vii Gift Card</div>
</body></html>
